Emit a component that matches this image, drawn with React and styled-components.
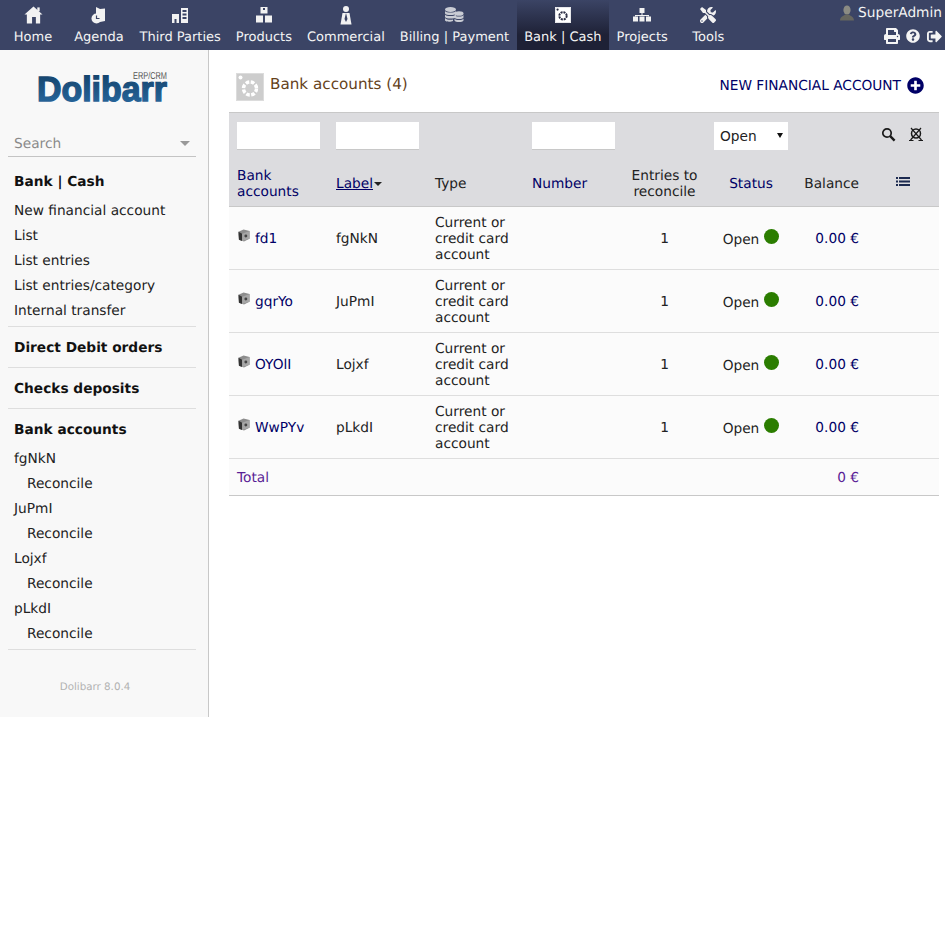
import styled, { createGlobalStyle } from "styled-components";
import { FaPrint, FaQuestionCircle, FaSignOutAlt, FaPlusCircle, FaTools } from "react-icons/fa";

const GlobalStyle = createGlobalStyle`
  html, body {
    margin: 0;
    padding: 0;
    background: #fff;
    font-family: "DejaVu Sans", sans-serif;
    font-size: 13.72px;
    color: #222;
    text-rendering: geometricPrecision;
  }
`;

const TopBar = styled.header`
  height: 50px;
  background: #3b4465;
  display: flex;
  justify-content: space-between;
`;

const Nav = styled.nav`
  display: flex;
`;

const NavItem = styled.div`
  min-width: 66px;
  padding: 0 7.5px;
  box-sizing: border-box;
  height: 50px;
  display: flex;
  flex-direction: column;
  align-items: center;
  color: #f4f4f4;
  font-size: 13px;
  white-space: nowrap;
  background: ${(p) => (p.$active ? "linear-gradient(#3b4465, #1e2136 70%)" : "none")};
`;

const NavIconBox = styled.div`
  height: 30px;
  display: flex;
  align-items: center;
  justify-content: center;
  svg {
    display: block;
  }
`;

const UserArea = styled.div`
  display: flex;
  flex-direction: column;
  align-items: flex-end;
  padding: 4px 3px 0 0;
  color: #f4f4f4;
`;

const UserRow = styled.div`
  display: flex;
  align-items: center;
  gap: 4px;
  height: 18px;
`;

const ActionRow = styled.div`
  display: flex;
  align-items: center;
  gap: 6px;
  margin-top: 6px;
  height: 16px;
  svg:nth-child(2) {
    margin-right: 1px;
  }
`;

const Layout = styled.div`
  display: flex;
  align-items: flex-start;
`;

const Sidebar = styled.aside`
  width: 209px;
  height: 667px;
  box-sizing: border-box;
  background: #f8f8f8;
  border-right: 1px solid #c8c8c8;
  padding: 0 12px 0 8px;
`;

const LogoBox = styled.div`
  height: 70px;
  padding-top: 15px;
  box-sizing: border-box;
  padding-left: 28px;
`;

const SearchBox = styled.div`
  margin-top: 13px;
  height: 23px;
  border-bottom: 1px solid #c4c4c4;
  display: flex;
  justify-content: space-between;
  align-items: flex-start;
  padding: 0 6px;
  line-height: 22px;
  color: #8a8a8a;
`;

const Caret = styled.span`
  width: 0;
  height: 0;
  margin-top: 8px;
  border-left: 5px solid transparent;
  border-right: 5px solid transparent;
  border-top: 5px solid #999;
`;

const MenuBlock = styled.div`
  padding: ${(p) => p.$top ?? 12}px 0 ${(p) => p.$bottom ?? 10}px;
  border-bottom: 1px solid #dedede;
`;

const MenuTitle = styled.div`
  font-weight: bold;
  line-height: 18px;
  padding-left: 6px;
  color: #111;
`;

const MenuList = styled.div`
  margin-top: 8px;
`;

const MenuItem = styled.div`
  line-height: 25px;
  padding-left: ${(p) => (p.$sub ? 19 : 6)}px;
  color: #222;
`;

const Version = styled.div`
  margin-top: 30px;
  margin-right: 14px;
  text-align: center;
  font-size: 10.3px;
  color: #b2b2b2;
  line-height: 14px;
`;

const Main = styled.main`
  flex: 1;
  padding: 23px 6px 0 20px;
  min-width: 0;
`;

const TitleRow = styled.div`
  display: flex;
  align-items: flex-start;
  justify-content: space-between;
  height: 39px;
  padding: 0 15px 0 7px;
`;

const TitleLeft = styled.div`
  display: flex;
  align-items: flex-start;
  gap: 6px;
`;

const Title = styled.div`
  font-size: 15.2px;
  line-height: 23px;
  color: #65421b;
`;

const NewLink = styled.div`
  display: flex;
  align-items: center;
  gap: 6px;
  margin-top: 2px;
  height: 22px;
  color: #000066;
  text-transform: uppercase;
  svg {
    margin-bottom: 2px;
  }
`;

const Table = styled.table`
  width: 710px;
  table-layout: fixed;
  border-collapse: separate;
  border-spacing: 0;
  border-top: 1px solid #c8c8c8;
`;

const Cell = styled.td`
  box-sizing: border-box;
  height: ${(p) => p.$h || 63}px;
  padding: 2px 8px 0;
  line-height: 16px;
  vertical-align: middle;
  text-align: ${(p) => p.$align || "left"};
  color: ${(p) => p.$color || "#222"};
  background: ${(p) => p.$bg || "#fbfbfb"};
  border-bottom: 1px solid ${(p) => p.$line || "#dedede"};
`;

const FilterCell = styled.td`
  box-sizing: border-box;
  height: 46px;
  padding: 0 8px;
  vertical-align: middle;
  background: #dcdcdf;
`;

const FilterInput = styled.div`
  width: 83px;
  height: 28px;
  box-sizing: border-box;
  background: #fff;
  border-bottom: 1px solid #c8c8c8;
`;

const SelectWrap = styled.div`
  position: relative;
  width: 74px;
  height: 28px;
`;

const FilterSelect = styled.select`
  display: block;
  width: 74px;
  height: 28px;
  margin: 0;
  padding: 0 0 0 6px;
  border: none;
  border-radius: 0;
  appearance: none;
  background: #fff;
  color: #222;
  font-family: inherit;
  font-size: inherit;
`;

const SelectArrow = styled.span`
  position: absolute;
  top: 11px;
  right: 5px;
  width: 0;
  height: 0;
  border-left: 3px solid transparent;
  border-right: 3px solid transparent;
  border-top: 5.5px solid #111;
`;

const FilterButtons = styled.div`
  display: flex;
  justify-content: flex-end;
  gap: 12px;
  padding: 0 7px 3px 0;
`;

const SortLabel = styled.span`
  color: #000066;
  text-decoration: underline;
`;

const SortArrow = styled.span`
  display: inline-block;
  width: 0;
  height: 0;
  margin-left: 1px;
  vertical-align: middle;
  border-left: 4px solid transparent;
  border-right: 4px solid transparent;
  border-top: 4px solid #222;
`;

const AccountLink = styled.span`
  display: inline-flex;
  align-items: center;
  gap: 5px;
  padding-top: 2px;
  color: #000066;
  svg {
    position: relative;
    top: -3px;
    margin-left: 1px;
  }
`;

const StatusCell = styled.span`
  display: inline-flex;
  align-items: center;
  gap: 5px;
  padding-top: 2px;
`;

const Dot = styled.span`
  width: 15px;
  height: 15px;
  border-radius: 50%;
  background: #2b7d00;
  position: relative;
  top: -4px;
`;

const HeadIcon = styled.span`
  display: inline-block;
  position: relative;
  top: -2px;
`;

const rows = [
  { ref: "fd1", label: "fgNkN" },
  { ref: "gqrYo", label: "JuPmI" },
  { ref: "OYOlI", label: "Lojxf" },
  { ref: "WwPYv", label: "pLkdI" },
];

const HomeIcon = () => (
  <svg width="19" height="18" viewBox="0 0 20 18" fill="#f2f2f2">
    <path d="M10 0 L19.5 8.5 L17 8.5 L17 18 L12.5 18 L12.5 11 L8.5 11 L8.5 18 L3 18 L3 8.5 L.5 8.5 Z" />
    <rect x="14" y="1" width="2.5" height="4" />
  </svg>
);

const AgendaIcon = () => (
  <svg width="16" height="17" viewBox="0 0 16 17" fill="#f2f2f2">
    <path d="M5 0 L9 2 L14 1.5 L14 14 L9 15 C10 11 8 8 5 7 Z" />
    <circle cx="5.5" cy="11.5" r="5" />
    <path d="M5.5 8.5 V11.5 H8.5" stroke="#3b4465" strokeWidth="1.2" fill="none" />
  </svg>
);

const CompanyIcon = () => (
  <svg width="18" height="17" viewBox="0 0 18 17" fill="#f2f2f2">
    <path d="M1 7 H8 V16 H5.5 V12 H3.5 V16 H1 Z" />
    <path d="M10 1 H17 V16 H10 Z M11.5 3 V5 H15.5 V3 Z M11.5 6.5 V8.5 H15.5 V6.5 Z M11.5 10 V12 H15.5 V10 Z" fillRule="evenodd" />
  </svg>
);

const BoxesIcon = () => (
  <svg width="18" height="16" viewBox="0 0 18 16" fill="#f2f2f2">
    <rect x="5.5" y="0" width="7" height="6.5" />
    <rect x="1" y="8.5" width="7" height="7" />
    <rect x="10" y="8.5" width="7" height="7" />
    <rect x="8" y="1" width="2" height="2" fill="#3b4465" />
  </svg>
);

const CommercialIcon = () => (
  <svg width="12" height="19" viewBox="0 0 12 19" fill="#f2f2f2">
    <circle cx="6" cy="3" r="3" />
    <path d="M2.5 7 L9.5 7 L11.5 18.5 L0.5 18.5 Z" />
    <path d="M6 7 L7.5 13 L6 16 L4.5 13 Z" fill="#3b4465" />
  </svg>
);

const CoinsIcon = () => (
  <svg width="20" height="16" viewBox="0 0 20 16" fill="#c9ccd4">
    <ellipse cx="6.5" cy="2.5" rx="5.5" ry="2.5" />
    <path d="M1 4 C2 6 11 6 12 4 V6.5 C11 8.5 2 8.5 1 6.5 Z" />
    <path d="M1 7.5 C2 9.5 11 9.5 12 7.5 V10 C11 12 2 12 1 10 Z" />
    <path d="M1 11 C2 13 8 13 9 12.5 V14 C7 15 2 15 1 13.5 Z" />
    <ellipse cx="15" cy="6.5" rx="4.5" ry="2.3" />
    <path d="M10.5 8 C11.5 10 18.5 10 19.5 8 V10.5 C18.5 12.5 11.5 12.5 10.5 10.5 Z" />
    <path d="M10.5 11.5 C11.5 13.5 18.5 13.5 19.5 11.5 V13.5 C18.5 15.5 11.5 15.5 10.5 13.5 Z" />
  </svg>
);

// the round "safe" mark, used in the menu and beside the page title
const SafeMark = ({ size, bg, fg, line }) => (
  <svg width={size} height={size} viewBox="0 0 28 28">
    <rect x="0.5" y="0.5" width="27" height="27" fill={bg} stroke={line} />
    <circle cx="4.5" cy="4.5" r="2" fill={fg} />
    <circle cx="14" cy="15.5" r="6.5" fill="none" stroke={fg} strokeWidth="3.4" strokeDasharray="3.6 1.5" />
  </svg>
);

const ProjectsIcon = () => (
  <svg width="18" height="14" viewBox="0 0 18 14" fill="#f2f2f2">
    <rect x="6.5" y="0" width="5" height="5" />
    <rect x="0" y="8.5" width="5" height="5" />
    <rect x="6.5" y="8.5" width="5" height="5" />
    <rect x="13" y="8.5" width="5" height="5" />
    <path d="M8.5 5 H9.5 V7 H16 V8.5 H15 V8 H3 V8.5 H2 V7 H8.5 Z" />
  </svg>
);

const UserIcon = () => (
  <svg width="14" height="16" viewBox="0 0 14 16">
    <ellipse cx="7" cy="5" rx="3.6" ry="4.6" fill="#8b8b83" />
    <path d="M0 15.5 C0 11.5 4 11 5 9.5 H9 C10 11 14 11.5 14 15.5 Z" fill="#66665f" />
  </svg>
);

const SearchIcon = () => (
  <svg width="15" height="15" viewBox="0 0 15 15" fill="none" stroke="#1a1a1a">
    <circle cx="6" cy="6" r="4.2" strokeWidth="1.7" />
    <path d="M9.2 9.2 L13.6 13.6" strokeWidth="2.4" />
  </svg>
);

const ClearIcon = () => (
  <svg width="16" height="15" viewBox="0 0 16 15" fill="none" stroke="#1a1a1a">
    <circle cx="8" cy="6.5" r="4.5" strokeWidth="1.5" />
    <path d="M3 1 L13.5 13 M13 1 L2.5 13 M1 13.5 H5.5 M10.5 13.5 H15" strokeWidth="1.2" />
  </svg>
);

const ListIcon = () => (
  <svg width="14" height="9" viewBox="0 0 14 9" fill="#1c2a50">
    <rect x="0" y="0" width="2" height="2" />
    <rect x="3" y="0" width="11" height="2" />
    <rect x="0" y="3.5" width="2" height="2" />
    <rect x="3" y="3.5" width="11" height="2" />
    <rect x="0" y="7" width="2" height="2" />
    <rect x="3" y="7" width="11" height="2" />
  </svg>
);

const AccountIcon = () => (
  <svg width="12" height="13" viewBox="0 0 13 14">
    <path d="M0.5 3 L6 0.5 L12.5 2 L12.5 10.5 L6.5 13.5 L1 11.5 Z" fill="#8c8c8c" />
    <path d="M0.5 3 L4.5 5 L4.5 13 L1 11.5 Z" fill="#333" />
    <path d="M4.5 5 L12.5 2 L12.5 10.5 L4.5 13 Z" fill="#a6a6a6" />
    <circle cx="8.5" cy="7.5" r="1.6" fill="#444" />
  </svg>
);

const Logo = () => (
  <svg width="134" height="40" viewBox="0 0 134 40">
    <defs>
      <linearGradient id="logoBlue" x1="0" y1="0" x2="0" y2="1">
        <stop offset="0" stopColor="#123f66" />
        <stop offset="1" stopColor="#2a6ba3" />
      </linearGradient>
    </defs>
    <text x="97" y="14" fontFamily="Liberation Sans" fontSize="10" textLength="34" lengthAdjust="spacingAndGlyphs" fill="#555">ERP/CRM</text>
    <text x="1" y="36" fontFamily="Liberation Sans" fontWeight="bold" fontSize="35" textLength="130" lengthAdjust="spacingAndGlyphs" fill="url(#logoBlue)" stroke="url(#logoBlue)" strokeWidth="1.4">Dolibarr</text>
  </svg>
);

const navItems = [
  { label: "Home", icon: <HomeIcon /> },
  { label: "Agenda", icon: <AgendaIcon /> },
  { label: "Third Parties", icon: <CompanyIcon /> },
  { label: "Products", icon: <BoxesIcon /> },
  { label: "Commercial", icon: <CommercialIcon /> },
  { label: "Billing | Payment", icon: <CoinsIcon /> },
  { label: "Bank | Cash", icon: <SafeMark size={16} bg="#fff" fg="#2a2d44" line="#fff" />, active: true },
  { label: "Projects", icon: <ProjectsIcon /> },
  { label: "Tools", icon: <FaTools size={16} color="#f2f2f2" /> },
];

export default function App() {
  return (
    <>
      <GlobalStyle />
      <TopBar>
        <Nav>
          {navItems.map((item) => (
            <NavItem key={item.label} $active={item.active}>
              <NavIconBox>{item.icon}</NavIconBox>
              {item.label}
            </NavItem>
          ))}
        </Nav>
        <UserArea>
          <UserRow>
            <UserIcon />
            SuperAdmin
          </UserRow>
          <ActionRow>
            <FaPrint size={16} />
            <FaQuestionCircle size={14} />
            <FaSignOutAlt size={15} />
          </ActionRow>
        </UserArea>
      </TopBar>
      <Layout>
        <Sidebar>
          <LogoBox>
            <Logo />
          </LogoBox>
          <SearchBox>
            Search
            <Caret />
          </SearchBox>
          <MenuBlock $top={16} $bottom={2}>
            <MenuTitle>Bank | Cash</MenuTitle>
            <MenuList>
              <MenuItem>New financial account</MenuItem>
              <MenuItem>List</MenuItem>
              <MenuItem>List entries</MenuItem>
              <MenuItem>List entries/category</MenuItem>
              <MenuItem>Internal transfer</MenuItem>
            </MenuList>
          </MenuBlock>
          <MenuBlock>
            <MenuTitle>Direct Debit orders</MenuTitle>
          </MenuBlock>
          <MenuBlock>
            <MenuTitle>Checks deposits</MenuTitle>
          </MenuBlock>
          <MenuBlock $bottom={2}>
            <MenuTitle>Bank accounts</MenuTitle>
            <MenuList>
              {rows.map((r) => (
                <div key={r.label}>
                  <MenuItem>{r.label}</MenuItem>
                  <MenuItem $sub>Reconcile</MenuItem>
                </div>
              ))}
            </MenuList>
          </MenuBlock>
          <Version>Dolibarr 8.0.4</Version>
        </Sidebar>
        <Main>
          <TitleRow>
            <TitleLeft>
              <SafeMark size={28} bg="#cdcdcd" fg="#fff" line="#dcdcdc" />
              <Title>Bank accounts (4)</Title>
            </TitleLeft>
            <NewLink>
              New financial account
              <FaPlusCircle size={17} />
            </NewLink>
          </TitleRow>
          <Table>
            <colgroup>
              <col width="99" />
              <col width="99" />
              <col width="97" />
              <col width="99" />
              <col width="83" />
              <col width="90" />
              <col width="71" />
              <col width="72" />
            </colgroup>
            <thead>
              <tr>
                <FilterCell><FilterInput /></FilterCell>
                <FilterCell><FilterInput /></FilterCell>
                <FilterCell />
                <FilterCell><FilterInput /></FilterCell>
                <FilterCell />
                <FilterCell>
                  <SelectWrap>
                    <FilterSelect defaultValue="Open">
                      <option>Open</option>
                      <option>Closed</option>
                    </FilterSelect>
                    <SelectArrow />
                  </SelectWrap>
                </FilterCell>
                <FilterCell colSpan={2}>
                  <FilterButtons>
                    <SearchIcon />
                    <ClearIcon />
                  </FilterButtons>
                </FilterCell>
              </tr>
              <tr>
                <Cell $h={48} $bg="#dcdcdf" $line="#c8c8c8" $color="#000066">Bank accounts</Cell>
                <Cell $h={48} $bg="#dcdcdf" $line="#c8c8c8">
                  <SortLabel>Label</SortLabel>
                  <SortArrow />
                </Cell>
                <Cell $h={48} $bg="#dcdcdf" $line="#c8c8c8">Type</Cell>
                <Cell $h={48} $bg="#dcdcdf" $line="#c8c8c8" $color="#000066">Number</Cell>
                <Cell $h={48} $bg="#dcdcdf" $line="#c8c8c8" $align="center">Entries to reconcile</Cell>
                <Cell $h={48} $bg="#dcdcdf" $line="#c8c8c8" $align="center" $color="#000066">Status</Cell>
                <Cell $h={48} $bg="#dcdcdf" $line="#c8c8c8" $align="right">Balance</Cell>
                <Cell $h={48} $bg="#dcdcdf" $line="#c8c8c8" $align="center">
                  <HeadIcon><ListIcon /></HeadIcon>
                </Cell>
              </tr>
            </thead>
            <tbody>
              {rows.map((r) => (
                <tr key={r.ref}>
                  <Cell>
                    <AccountLink>
                      <AccountIcon />
                      {r.ref}
                    </AccountLink>
                  </Cell>
                  <Cell>{r.label}</Cell>
                  <Cell>Current or credit card account</Cell>
                  <Cell />
                  <Cell $align="center">1</Cell>
                  <Cell $align="center">
                    <StatusCell>
                      Open
                      <Dot />
                    </StatusCell>
                  </Cell>
                  <Cell $align="right" $color="#000066">0.00 €</Cell>
                  <Cell />
                </tr>
              ))}
              <tr>
                <Cell $h={37} $line="#c8c8c8" $color="#5a1e96">Total</Cell>
                <Cell $h={37} $line="#c8c8c8" />
                <Cell $h={37} $line="#c8c8c8" />
                <Cell $h={37} $line="#c8c8c8" />
                <Cell $h={37} $line="#c8c8c8" />
                <Cell $h={37} $line="#c8c8c8" />
                <Cell $h={37} $line="#c8c8c8" $align="right" $color="#5a1e96">0 €</Cell>
                <Cell $h={37} $line="#c8c8c8" />
              </tr>
            </tbody>
          </Table>
        </Main>
      </Layout>
    </>
  );
}
